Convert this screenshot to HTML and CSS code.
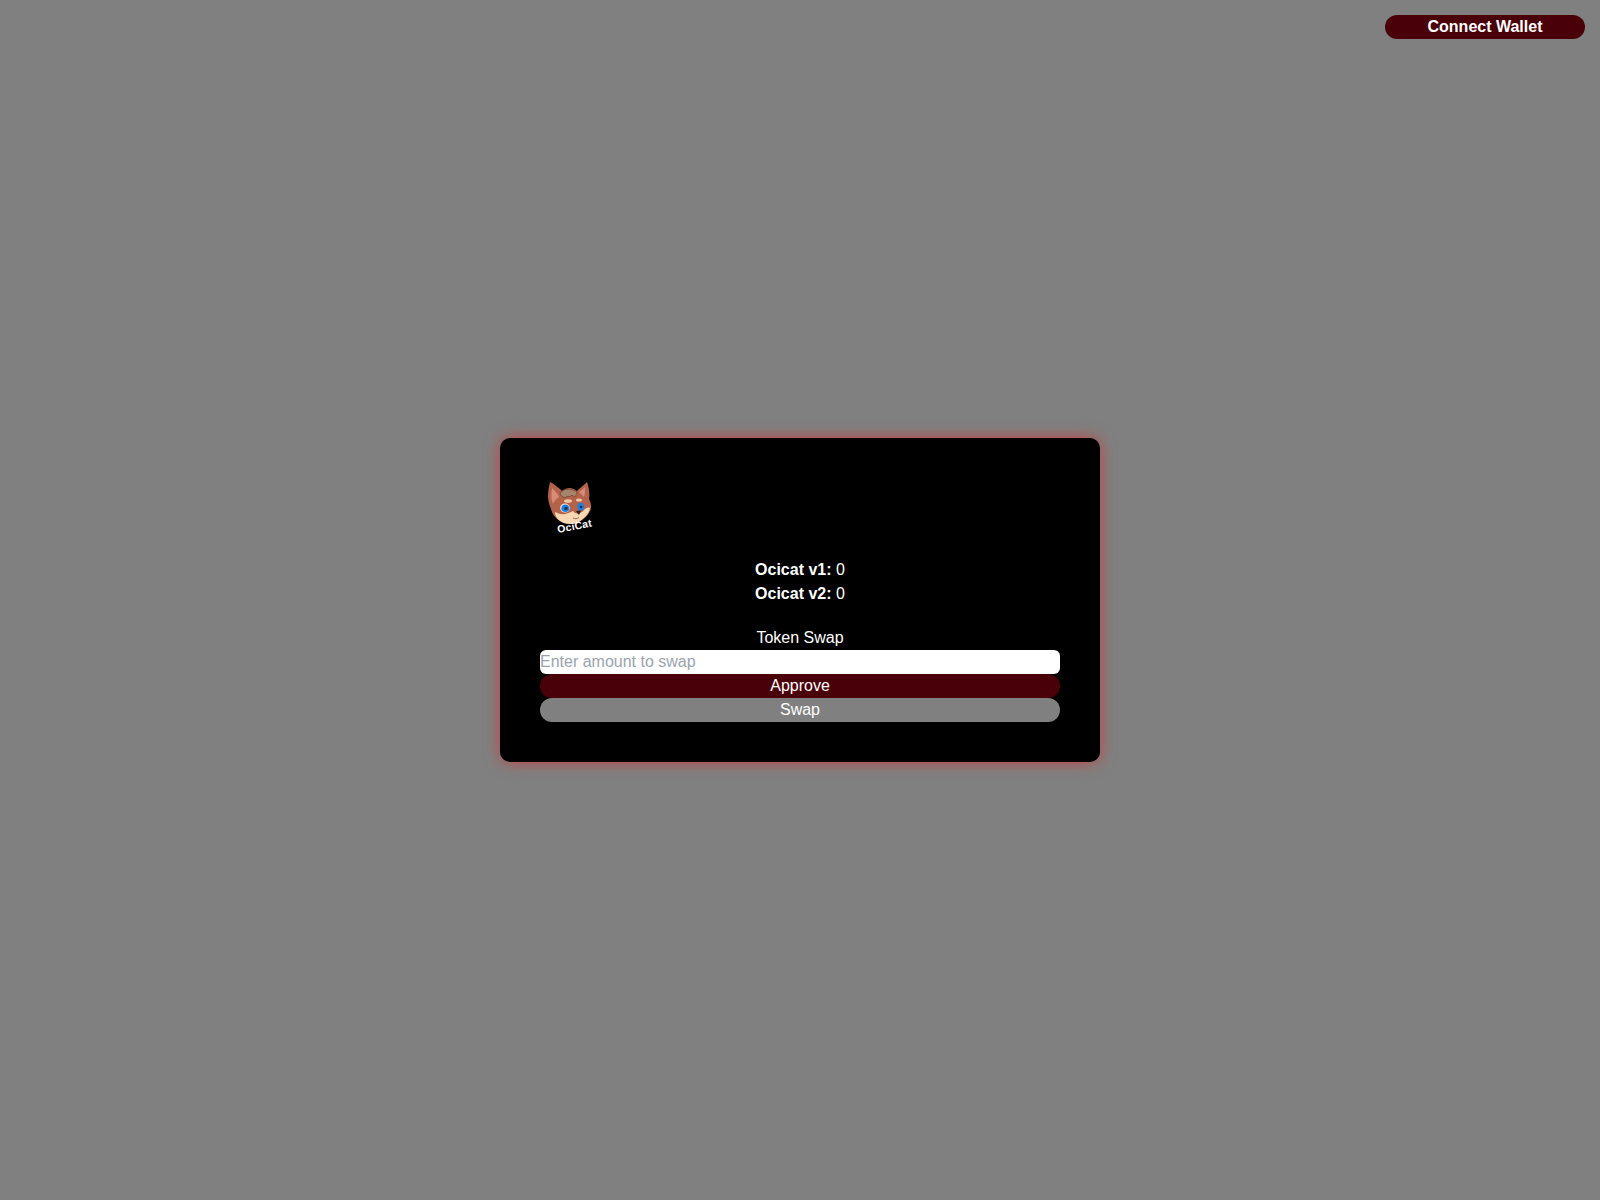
FILE: index.html
```html
<!DOCTYPE html>
<html lang="en">
<head>
  <meta charset="UTF-8" />
  <title>Ocicat Token Swap</title>
  <meta name="viewport" content="width=device-width, initial-scale=1.0" />
  <link rel="stylesheet" href="styles.css">
</head>
<body>
  <button class="connect-btn">Connect Wallet</button>

  <div class="swap-card">
    <!-- logo -->
    <svg class="logo" viewBox="0 0 80 80" width="80" height="80" role="img" aria-label="OciCat">
      <defs>
        <filter id="soft"><feGaussianBlur stdDeviation="0.4"/></filter>
      </defs>
      <g filter="url(#soft)">
        <path d="M10 4 C14 6 19 10 22 13 C27 9 32 9 37 13 C40 10 44 7 47 4 C49 10 50 16 49 21 C51 25 52 29 50 33 C48 38 43 42 37 45 C31 47 24 46 20 43 C15 40 12 36 11 31 C9 26 8 22 8 18 C8 13 9 9 10 4 Z" fill="#b4634b"/>
        <path d="M12 10 C15 13 18 16 19 19 C16 21 14 23 13 26 C11 22 11 16 12 10 Z" fill="#d98a78"/>
        <path d="M45 9 C45 13 45 16 44 19 C42 17 40 15 39 14 C41 13 43 11 45 9 Z" fill="#d98a78"/>
        <path d="M20 15 C24 10 32 10 37 14 C37 18 34 20 32 17 C30 20 27 17 25 20 C23 19 20 18 20 15 Z" fill="#a5846a" stroke="#70402f" stroke-width=".8"/>
        <ellipse cx="28" cy="23" rx="4" ry="1.8" fill="#f3c9a8"/>
        <ellipse cx="39" cy="22" rx="3" ry="1.6" fill="#f3c9a8"/>
        <path d="M15 34 C18 35 21 37 25 36 C29 35 31 34 33 33 C36 37 41 36 44 32 C46 30 48 29 50 30 C49 36 44 41 37 45 C31 47 24 46 20 43 C17 41 15 38 15 34 Z" fill="#f6d8b4"/>
        <ellipse cx="25" cy="30" rx="4.8" ry="4.6" fill="#f6e6d4"/>
        <ellipse cx="25.3" cy="30.2" rx="3.9" ry="3.8" fill="#1c7ee0"/>
        <circle cx="26" cy="30.4" r="1.6" fill="#10305f"/>
        <ellipse cx="40.7" cy="28.7" rx="3.2" ry="4" fill="#1c7ee0"/>
        <circle cx="41" cy="29" r="1.3" fill="#10305f"/>
        <path d="M36 33 L41 32.5 L39 37 Z" fill="#2a1510"/>
        <path d="M33 40 C35 41 37 41 39 39.5" fill="none" stroke="#8a5040" stroke-width=".8"/>
      </g>
      <text class="logo-text" x="18" y="55" transform="rotate(-11 18 55)">OciCat</text>
    </svg>

    <div class="balances">
      <p><strong>Ocicat v1:</strong> 0</p>
      <p><strong>Ocicat v2:</strong> 0</p>
    </div>

    <h2 class="swap-title">Token Swap</h2>
    <input class="amount-input" type="number" placeholder="Enter amount to swap" />
    <button class="btn btn-approve">Approve</button>
    <button class="btn btn-swap">Swap</button>
  </div>
</body>
</html>
```

FILE: styles.css
```css
html, body {
  margin: 0; padding: 0;
  width: 100%; height: 100%;
}
body {
  font-family: "Liberation Sans", Arial, sans-serif;
  font-size: 16px;
  line-height: 24px;
  color: #fff;
  background-color: #808080;
  display: flex;
  justify-content: center;
  align-items: center;
}
button, input {
  font: inherit;
  border: 0;
  padding: 0;
  margin: 0;
  display: block;
  width: 100%;
  height: 24px;
}
.connect-btn {
  position: absolute;
  top: 15px;
  right: 15px;
  width: 200px;
  font-weight: bold;
  color: #fff;
  background-color: #4a0009;
  border-radius: 12px;
}
.swap-card {
  box-sizing: border-box;
  width: 600px;
  height: 324px;
  padding: 40px;
  background-color: #000;
  border-radius: 10px;
  box-shadow: 0 0 15px rgba(255, 0, 0, 0.5);
}
.logo {
  display: block;
}
.logo-text {
  font-family: "Liberation Sans", Arial, sans-serif;
  font-size: 10.5px;
  font-weight: bold;
  letter-spacing: 0.2px;
  fill: #fff;
}
.balances {
  text-align: center;
}
.balances p {
  margin: 0;
}
.swap-title {
  margin: 20px 0 0;
  font-size: 16px;
  font-weight: normal;
  text-align: center;
}
.amount-input {
  box-sizing: border-box;
  background-color: #fff;
  color: #000;
  border-radius: 6px;
  outline: none;
}
.amount-input::placeholder {
  color: #9ca3af;
  opacity: 1;
}
.btn {
  color: #fff;
  text-align: center;
  border-radius: 12px;
}
.btn-approve {
  background-color: #4a0009;
}
.btn-swap {
  background-color: #808080;
}
```
